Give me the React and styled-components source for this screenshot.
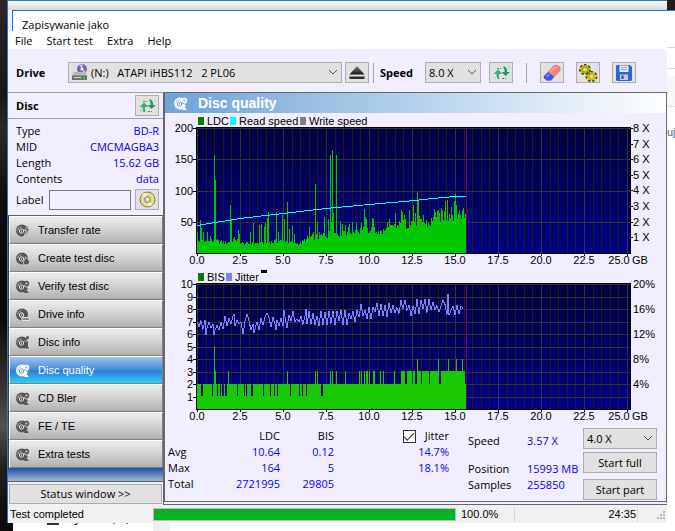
import { useState } from "react";
import styled, { createGlobalStyle } from "styled-components";

const GlobalStyle = createGlobalStyle`
* {
box-sizing: border-box;
}

body {
margin: 0;
background: #181315;
color: #000000;
font-family: "Open Sans", "Noto Sans", sans-serif;
font-size: 11px;
line-height: 16px;
}

button, input, select {
font: inherit;
color: inherit;
}
`

const Desktop = styled.div`
display: flex;
flex-direction: column;
min-height: 100vh;
background: linear-gradient(180deg, #2c2626 0%, #1b1516 18%, #302727 24%, #120c0d 38%, #0e0808 60%, #3b3534 74%, #575150 80%, #231d1d 88%, #0d0909 100%);
`

const Screen = styled.div`
display: flex;
padding-left: 7px;
`

const AppWindow = styled.div`
flex: 1;
min-width: 0;
border-left: 1px solid #1c7ccc;
background: #f0eeff;
`

const TitleStrip = styled.div`
height: 10px;
border-top: 1px solid #1c7ccc;
background: linear-gradient(180deg, #f8f8f8, #d8d8d8);
`

const DialogTitle = styled.div`
height: 21px;
margin-left: 4px;
padding: 7px 0 0 9px;
overflow: hidden;
border-top: 1px solid #1c7ccc;
border-left: 1px solid #1c7ccc;
background: #ffffff;
line-height: 13px;
`

const MenuBar = styled.nav`
display: flex;
gap: 14px;
height: 18px;
padding: 0 7px;
background: #ffffff;
`

const MenuButton = styled.button`
padding: 2px 0 0;
border: 0;
background: none;
line-height: 16px;
`

const ToolBar = styled.div`
display: flex;
align-items: center;
height: 43px;
padding: 4px 8px 0;
`

const ToolLabel = styled.label`
width: ${(props) => props.$width};
font-weight: 700;
`

const SelectBox = styled.div`
position: relative;
width: ${(props) => props.$width};
height: 21px;
`

const Select = styled.select`
width: 100%;
height: 100%;
padding: 0 16px 0 ${(props) => props.$indent || "3px"};
border: 1px solid #adadad;
border-radius: 0;
background: #e1e1e1;
appearance: none;
white-space: pre;
`

const Chevron = styled.svg`
position: absolute;
right: 4px;
top: 7px;
width: 10px;
height: 7px;
pointer-events: none;
`

const DriveMark = styled.svg`
position: absolute;
left: 3px;
top: 2px;
width: 17px;
height: 17px;
pointer-events: none;
`

const IconButton = styled.button`
display: flex;
align-items: center;
justify-content: center;
flex: none;
width: 24px;
height: 21px;
margin-left: ${(props) => props.$gap || "0"};
padding: 0;
border: 1px solid #adadad;
background: #e1e1e1;
`

const Divider = styled.span`
flex: none;
width: 1px;
height: 20px;
margin: 0 ${(props) => props.$right} 0 ${(props) => props.$left};
background: #a0a0a0;
`

const Main = styled.div`
display: grid;
grid-template-columns: 155px minmax(0, 1fr);
`

const SideBar = styled.aside`
display: flex;
flex-direction: column;
border-top: 1px solid #a0a0a0;
`

const DiscHead = styled.div`
display: flex;
align-items: center;
justify-content: space-between;
height: 26px;
padding: 0 4px 0 8px;
border-bottom: 1px solid #a0a0a0;
font-weight: 700;
`

const DiscInfo = styled.div`
height: 96px;
padding: 4px 4px 0 8px;
`

const InfoRow = styled.div`
display: flex;
justify-content: space-between;
`

const InfoValue = styled.span`
color: #0000ff;
`

const LabelRow = styled.div`
display: flex;
align-items: center;
justify-content: space-between;
padding-top: 2px;
`

const LabelInput = styled.input`
width: 82px;
height: 20px;
margin-left: auto;
margin-right: 4px;
border: 1px solid #7a7a7a;
background: #f0eeff;
`

const NavList = styled.div`
border-top: 1px solid #606060;
border-left: 1px solid #404040;
`

const NavButton = styled.button`
display: flex;
align-items: center;
gap: 8px;
width: 100%;
height: 28px;
padding: 0 5px;
border: 1px solid #ffffff;
border-right-color: #808080;
border-bottom-color: #808080;
background: ${(props) => props.$active
    ? "linear-gradient(180deg, #9cc4f0 0%, #4a8ade 48%, #2f7ad6 52%, #2cd0f8 100%)"
    : "linear-gradient(180deg, #ececec 0%, #d2d2d2 50%, #b0b0b0 100%)"};
color: ${(props) => props.$active ? "#ffffff" : "#000000"};
font-family: "Liberation Sans", Arial, sans-serif;
text-align: left;
`

const NavFoot = styled.div`
height: 14px;
background: linear-gradient(180deg, #1f4fa0, #9ab8da);
border-bottom: 1px solid #606060;
`

const StatusButton = styled.button`
height: 20px;
margin: 2px 1px 0;
padding: 0;
border: 1px solid #adadad;
background: #e1e1e1;
line-height: 18px;
`

const Panel = styled.section`
border: 1px solid #66666c;
border-left-width: 2px;
border-bottom: 4px double #66666c;
`

const PanelTitle = styled.h1`
display: flex;
align-items: center;
gap: 10px;
height: 20px;
margin: 0;
padding-left: 8px;
background: linear-gradient(90deg, #6ea4d8, #ffffff);
color: #ffffff;
font-family: "Liberation Sans", Arial, sans-serif;
font-size: 14px;
`

const ChartSvg = styled.svg`
display: block;
width: 100%;
font-family: "Liberation Sans", Arial, sans-serif;
font-size: 11px;
`

const Stats = styled.div`
display: flex;
justify-content: space-between;
height: 78px;
padding: 5px 9px 0 3px;
`

const StatsTable = styled.table`
align-self: flex-start;
border-collapse: collapse;
margin-right: 19px;
`

const HeadCell = styled.th`
width: ${(props) => props.$width};
padding: 0;
font-weight: 400;
text-align: ${(props) => props.$left ? "left" : "right"};
`

const ValueCell = styled.td`
padding: 0;
color: #0000ff;
text-align: right;
`

const CheckLabel = styled.label`
display: flex;
align-items: center;
justify-content: flex-end;
gap: 9px;
`

const CheckInput = styled.input`
display: grid;
place-items: center;
width: 13px;
height: 13px;
margin: 0;
border: 1px solid #333333;
background: #ffffff;
appearance: none;

&:checked::before {
content: "";
width: 9px;
height: 4px;
border-left: 1px solid #333333;
border-bottom: 1px solid #333333;
transform: translateY(-1px) rotate(-45deg);
}
`

const Progress = styled.dl`
display: grid;
grid-template-columns: 59px 1fr;
align-content: start;
flex: 1;
margin: 0;
padding-top: 5px;
`

const ProgressName = styled.dt`
margin: 0;
padding-bottom: ${(props) => props.$tall ? "12px" : "0"};
`

const ProgressValue = styled.dd`
margin: 0;
color: #0000ff;
white-space: nowrap;
`

const Actions = styled.div`
display: flex;
flex-direction: column;
`

const ActionButton = styled.button`
width: 74px;
height: 21px;
margin-top: ${(props) => props.$gap};
padding: 0;
border: 1px solid #adadad;
background: #e1e1e1;
line-height: 18px;
`

const StatusBar = styled.footer`
display: flex;
align-items: center;
height: 18px;
background: #f0f0f0;
font-family: "Liberation Sans", Arial, sans-serif;
`

const StatusText = styled.span`
width: ${(props) => props.$width};
padding-left: 2px;
`

const StatusCell = styled.span`
width: ${(props) => props.$width};
height: 16px;
padding: 0 1px 0 5px;
border-right: 1px solid #d7d7d7;
text-align: ${(props) => props.$right ? "right" : "left"};
`

const ProgressTrack = styled.div`
flex: 1;
height: 13px;
border: 1px solid #bcbcbc;
background: #06b025;
`

const Grip = styled.svg`
flex: none;
width: 10px;
height: 10px;
margin: 4px 1px 0 18px;
`

const Behind = styled.div`
width: 8px;
overflow: hidden;
background: linear-gradient(180deg, #241c1c 10px, #1c7ccc 10px, #1c7ccc 11px, #ffffff 11px, #ffffff 47px, #d8d8d8 47px, #d8d8d8 48px, #ffffff 48px, #ffffff 68px, #d8d8d8 68px, #d8d8d8 69px, #ffffff 69px, #ffffff 76px, #f5f6f8 76px, #f5f6f8 106px, #e2e2e6 106px, #e2e2e6 107px, #ffffff 107px);
padding-top: 124px;
color: #666666;
font-family: "Liberation Sans", Arial, sans-serif;
`

const BehindFoot = styled.div`
display: flex;
flex: 1;
align-items: flex-start;
height: 8px;
margin-left: 13px;
overflow: hidden;
background: linear-gradient(90deg, #ffffff 140px, #f0f0f0 140px, #f0f0f0 157px, #ffffff 157px);
`

const FootDrive = styled.span`
width: 12px;
height: 2px;
margin: 0 9px 0 34px;
background: #333333;
`

const FootText = styled.span`
margin-top: -13px;
font-size: 12px;
`

function DiscIcon({ mark, active }) {
    const body = active ? "#ffffff" : "#555555";
    const line = active ? "#5b98dc" : "#e4e4e4";
    return (
        <svg width="15" height="15" viewBox="0 0 15 15" fill="none">
            <circle cx="7" cy="7.500" r="6" fill={body} />
            <circle cx="6.500" cy="8" r="2.200" stroke={line} />
            <circle cx="6.500" cy="8" r=".7" fill={line} />
            <path d="M2.500 7.500a4.500 4.500 0 0 1 4-4" stroke={line} strokeOpacity=".6" />
            {mark === "gear" && (
                <g>
                    <circle cx="11.500" cy="4.500" r="2.700" fill={body} />
                    <circle cx="11.500" cy="4.500" r="1.300" fill={line} fillOpacity=".6" />
                    <path d="M9 6.500l2.500 1.500 3.500.5" stroke={line} />
                    <path d="M11 10.500l3 3.500H9z" fill={body} />
                </g>
            )}
            {mark === "bolt" && <path d="M14.500 1l-5 6.500h2L9 13.500l6-7.500h-2z" fill={body} stroke={line} strokeWidth=".8" />}
            {mark === "flame" && <path d="M10.500 6c2 2 5 3.500 4 6-1 2.500-5.500 2.500-6 .5-.5-2.500 2-3.500 2-6.500z" fill={body} stroke={line} strokeWidth=".8" />}
            {mark === "drive" && <path d="M7 10.500h7.500v3H7z" fill="#888888" stroke={line} />}
            {mark === "info" && (
                <g>
                    <path d="M9.500 6h4v6h1v2h-5" fill={body} stroke={line} strokeWidth=".8" />
                    <circle cx="12.500" cy="2.500" r="1.500" fill={body} />
                </g>
            )}
        </svg>
    )
}

function RefreshIcon() {
    return (
        <svg width="17" height="16" viewBox="0 0 17 16">
            <path d="M5 4.500L.5 9H3.500v2l1 3h2L6 11V9h3.500z" fill="#2fb573" />
            <path d="M12.500 11L17 7h-3V4.500L12 1.500h-2L11.500 5v2H8.500z" fill="#26985f" />
            <path d="M4 3.500h4M9 13.500h4" stroke="#55806c" strokeDasharray="2 1" />
            <path d="M1 12l2 2M15 1.500L17 3" stroke="#8fd8b4" />
        </svg>
    )
}

function EjectIcon() {
    return (
        <svg width="16" height="14" viewBox="0 0 16 14">
            <defs>
                <linearGradient id="eject" x2="0" y2="1">
                    <stop offset="0" stopColor="#8a8a8a" />
                    <stop offset="1" stopColor="#111111" />
                </linearGradient>
            </defs>
            <path d="M8 0l7.500 8.500H.5z" fill="url(#eject)" />
            <path d="M.5 10h15v3H.5z" fill="#2c2c2c" />
            <path d="M.5 10.500h15" stroke="#888888" />
        </svg>
    )
}

function EraserIcon() {
    return (
        <svg width="18" height="18" viewBox="0 0 18 18">
            <path d="M11 1.500h4l2 2v3l-6 6.500-5.500-5z" fill="#ff8080" stroke="#b06060" strokeWidth=".6" />
            <path d="M5 8l6 5-3 3.500H4l-3-2.500v-2z" fill="#4848f0" stroke="#7070a0" strokeWidth=".6" />
            <path d="M7 7l4-4.500h3L8.500 8.500z" fill="#ffa4a4" />
            <path d="M2.500 12L5 9l2 1.500L4.500 14z" fill="#7474ff" />
        </svg>
    )
}

function GearsIcon() {
    return (
        <svg width="19" height="18" viewBox="0 0 19 18" fill="none">
            <ellipse cx="6" cy="5.500" rx="4" ry="3.500" stroke="#45450a" strokeWidth="4" strokeDasharray="2 1.300" />
            <ellipse cx="6" cy="5.500" rx="3.400" ry="2.900" stroke="#b8b000" strokeWidth="2.600" />
            <ellipse cx="12.500" cy="12.500" rx="4" ry="3.500" stroke="#45450a" strokeWidth="4" strokeDasharray="2 1.300" />
            <ellipse cx="12.500" cy="12.500" rx="3.400" ry="2.900" stroke="#c8c000" strokeWidth="2.600" />
            <path d="M8 8l3 2" stroke="#77700a" strokeWidth="1.500" />
        </svg>
    )
}

function SaveIcon() {
    return (
        <svg width="18" height="18" viewBox="0 0 18 18">
            <path d="M2 1h13l2 2v13l-1 1H2l-1-1V2z" fill="#2468e0" />
            <path d="M4.500 1.500h9V8h-9z" fill="#e4e8f0" />
            <path d="M6 3.500h6M6 5.500h6" stroke="#9aa8c4" />
            <path d="M5 10.500h8V16H5z" fill="#c4ccd0" />
            <path d="M6.500 11.500h2V15h-2z" fill="#2c4c80" />
        </svg>
    )
}

function DiscButtonIcon() {
    return (
        <svg width="17" height="17" viewBox="0 0 17 17">
            <circle cx="8.500" cy="8.500" r="7.500" fill="#e6e08a" stroke="#77744c" />
            <path d="M8.500 8.500L3 3.500l3.500-2zM8.500 8.500l5 5.500-4 1.500z" fill="#fbf9d0" />
            <circle cx="8.500" cy="8.500" r="3" fill="#c9c9b0" stroke="#8c8960" />
            <circle cx="8.500" cy="8.500" r="1.200" fill="#ffffff" />
        </svg>
    )
}

function DropDown({ id, label, width, indent, options, icon }) {
    return (
        <SelectBox $width={width}>
            <Select id={id} aria-label={label} $indent={indent}>
                {options.map((option) => <option key={option}>{option}</option>)}
            </Select>
            {icon}
            <Chevron viewBox="0 0 10 7" fill="none" stroke="#555555">
                <path d="M1 1l4 4 4-4" />
            </Chevron>
        </SelectBox>
    )
}

// plot area inside the 501 unit wide chart drawing
const LEFT = 32;
const GB = 17.2;
const PLOT_RIGHT = 465;
const PLOT_HEIGHT = 125;
const END = 301;

// repeatable scatter for the columns between the measured peaks
function scatter(i, seed) {
    const n = Math.sin(i * 12.9898 + seed * 78.233) * 43758.5453;
    return n - Math.floor(n);
}

function along(points, x) {
    const next = points.findIndex((p) => p[0] >= x);
    if (next < 1) return points[next === 0 ? 0 : points.length - 1][1];
    const [x0, y0] = points[next - 1];
    const [x1, y1] = points[next];
    return y0 + (y1 - y0) * (x - x0) / (x1 - x0);
}

const ldcBase = [[0, 17], [18, 19], [30, 16], [38, 22], [46, 14], [63, 15], [83, 19], [103, 15], [112, 24], [128, 28], [148, 34], [173, 36], [183, 32], [203, 43], [218, 50], [225, 46], [232, 46], [243, 58], [258, 62], [269, 60]];

const ldcPeaks = {
    0: 34, 3: 53, 4: 40, 6: 33, 10: 33, 13: 27, 17: 156, 18: 116, 33: 77, 34: 54, 41: 37, 42: 31,
    53: 34, 56: 48, 62: 44, 64: 47, 67: 42, 68: 49, 70: 56, 71: 66, 79: 66, 81: 33, 85: 60, 87: 55,
    90: 82, 92: 39, 95: 43, 97: 31, 112: 42, 116: 33, 118: 111, 120: 50, 127: 58, 131: 55, 133: 157,
    134: 50, 135: 164, 136: 64, 139: 157, 143: 51, 145: 47, 148: 45, 152: 46, 155: 50, 159: 48,
    164: 48, 167: 71, 168: 57, 169: 54, 175: 56, 176: 54, 181: 35, 186: 38, 190: 50, 192: 54, 198: 64,
    204: 68, 205: 66, 207: 60, 212: 68, 216: 77, 218: 64, 220: 98, 221: 85, 226: 61, 237: 71,
    238: 66, 241: 69, 245: 69, 248: 83, 250: 85, 254: 74, 257: 83, 258: 95, 259: 77, 266: 72, 269: 60,
};

const readSpeed = [[0, 27], [43, 34], [86, 39], [129, 44], [172, 48], [218, 52], [236, 54], [258, 56], [269, 56]];

const bisGaps = [4, 5, 15, 20, 23, 25, 26, 28, 29, 40, 47, 49, 54, 55, 66, 73, 77, 80, 90, 93, 102, 105, 109, 124, 125];
const bisThree = [18, 31, 90, 118, 120, 133, 135, 139, 148, 162, 164, 167, 169, 170, 172, 176, 177, 183, 186, 197];
const bisFour = [220, 241, 251, 259, 265];
const bisLow = [208, 209, 215, 218, 219, 224, 232, 242, 243, 268];

const jitterBase = [[0, 6.8], [8, 6.7], [18, 6.5], [28, 7], [36, 7], [45, 6.8], [58, 6.7], [70, 7], [90, 7.1], [130, 7.2], [150, 7.4], [170, 7.8], [190, 8], [218, 8.1], [269, 8.1]];
const jitterPeaks = { 9: 5.9, 17: 5.9, 18: 6.3, 37: 7.6, 46: 6, 50: 7.6, 57: 6.1, 70: 7.7, 79: 6.3, 87: 7.9, 109: 8, 220: 8.8, 228: 8.8, 246: 8.7, 251: 9.2, 252: 7.5 };

function columns(values, top, scale) {
    return values.map((v, i) => `M${LEFT + i} ${top + PLOT_HEIGHT}v${-Math.round(v * scale)}h1v${Math.round(v * scale)}z`).join("");
}

const ldc = Array.from({ length: 270 }, (_, i) => ldcPeaks[i] || along(ldcBase, i) * (0.82 + scatter(i, 1) * 0.42));

const bis = Array.from({ length: 270 }, (_, i) => {
    if (i === 17) return 5;
    if (bisFour.includes(i)) return 4;
    if (bisThree.includes(i)) return 3;
    if (bisGaps.includes(i)) return 1;
    return i > 203 && !bisLow.includes(i) ? 3 : 2;
});

// one reading every second column, with the swing turning at each reading
const jitter = Array.from({ length: 268 }, (_, i) => {
    const swing = (0.1 + scatter(i, 3)) * (i < 90 ? 0.45 : 0.65);
    return [i, jitterPeaks[i] || along(jitterBase, i) + (i % 4 < 2 ? swing : -swing)];
}).filter(([i]) => i % 2 === 0 || jitterPeaks[i]);

function LegendItem({ x, y, color, children }) {
    return (
        <g>
            <rect x={x} y={y - 4} width="6" height="8" fill={color} />
            <text x={x + 9} y={y + 4}>{children}</text>
        </g>
    )
}

function Plot({ id, top, rows, children }) {
    const bottom = top + PLOT_HEIGHT;
    return (
        <g shapeRendering="crispEdges">
            <defs>
                <linearGradient id={id} x2="0" y2="1">
                    <stop offset="0" stopColor="#000040" />
                    <stop offset="1" stopColor="#000084" />
                </linearGradient>
            </defs>
            <rect x={LEFT - 1} y={top - 1} width={PLOT_RIGHT - LEFT + 2} height={PLOT_HEIGHT + 2} fill="#000000" />
            <rect x={LEFT} y={top} width={PLOT_RIGHT - LEFT} height={PLOT_HEIGHT} fill={`url(#${id})`} />
            {Array.from({ length: 51 }, (_, i) => (
                <rect key={i} x={Math.round(LEFT + i * GB / 2)} y={top} width="1" height={PLOT_HEIGHT} fill={i % 5 ? "#1c1c24" : "#343438"} />
            ))}
            {Array.from({ length: rows }, (_, i) => (
                <rect key={i} x={LEFT} y={Math.round(top + i * PLOT_HEIGHT / rows)} width={PLOT_RIGHT - LEFT} height="1" fill="#303036" />
            ))}
            {children}
            <rect x={END} y={top} width="1" height={PLOT_HEIGHT} fill="#700070" />
            {Array.from({ length: rows }, (_, i) => (
                <rect key={i} x={LEFT - 4} y={Math.round(top + i * PLOT_HEIGHT / rows)} width="4" height="1" />
            ))}
            {Array.from({ length: 11 }, (_, i) => (
                <rect key={i} x={Math.round(LEFT + i * GB * 2.5)} y={bottom} width="1" height="3" />
            ))}
        </g>
    )
}

function SizeAxis({ y }) {
    return (
        <g textAnchor="middle">
            {Array.from({ length: 10 }, (_, i) => (
                <text key={i} x={LEFT + i * 43} y={y}>{(i * 2.5).toFixed(1)}</text>
            ))}
            <text x="454" y={y}>25.0</text>
            <text x="475" y={y}>GB</text>
        </g>
    )
}

function LdcChart() {
    const top = 15;
    return (
        <ChartSvg viewBox="0 0 501 155" role="img" aria-label="LDC and read speed">
            <LegendItem x={33} y={8} color="#008000">LDC</LegendItem>
            <LegendItem x={65} y={8} color="#00ffff">Read speed</LegendItem>
            <LegendItem x={135} y={8} color="#808080">Write speed</LegendItem>
            <Plot id="ldcBack" top={top} rows={4}>
                <path d={columns(ldc, top, 0.625)} fill="#00c800" />
                <path d={"M" + readSpeed.map(([x, h]) => `${LEFT + x} ${top + PLOT_HEIGHT - h - 0.5}`).join("L")} fill="none" stroke="#00ffff" />
            </Plot>
            <g textAnchor="end">
                {[200, 150, 100, 50].map((n, i) => <text key={n} x="28" y={top + 4 + Math.round(i * 31.25)}>{n}</text>)}
            </g>
            {[8, 7, 6, 5, 4, 3, 2, 1].map((n, i) => (
                <g key={n}>
                    <rect x={PLOT_RIGHT} y={top + Math.round(i * 15.6)} width="3" height="1" shapeRendering="crispEdges" />
                    <text x="468" y={top + 4 + Math.round(i * 15.6)}>{n} X</text>
                </g>
            ))}
            <SizeAxis y={151} />
        </ChartSvg>
    )
}

function BisChart() {
    const top = 16;
    return (
        <ChartSvg viewBox="0 0 501 155" role="img" aria-label="BIS and jitter">
            <LegendItem x={33} y={9} color="#008000">BIS</LegendItem>
            <LegendItem x={61} y={9} color="#8080ff">Jitter</LegendItem>
            <rect x="96" y="2" width="6" height="3" />
            <Plot id="bisBack" top={top} rows={10}>
                <path d={columns(bis, top, 12.5)} fill="#18c800" />
                <path d={"M" + jitter.map(([x, v]) => `${LEFT + x} ${(top + PLOT_HEIGHT - v * 12.5).toFixed(1)}`).join("L")} fill="none" stroke="#8080ff" />
            </Plot>
            <g textAnchor="end">
                {[10, 9, 8, 7, 6, 5, 4, 3, 2, 1].map((n, i) => <text key={n} x="28" y={top + 4 + Math.round(i * 12.5)}>{n}</text>)}
            </g>
            {[20, 16, 12, 8, 4].map((n, i) => <text key={n} x="468" y={top + 4 + i * 25}>{n}%</text>)}
            <SizeAxis y={152} />
        </ChartSvg>
    )
}

const discInfo = [
    ["Type", "BD-R"],
    ["MID", "CMCMAGBA3"],
    ["Length", "15.62 GB"],
    ["Contents", "data"],
];

const pages = [
    ["Transfer rate", "bolt"],
    ["Create test disc", "flame"],
    ["Verify test disc", "gear"],
    ["Drive info", "drive"],
    ["Disc info", "info"],
    ["Disc quality", "gear"],
    ["CD Bler", "gear"],
    ["FE / TE", "gear"],
    ["Extra tests", "gear"],
];

function Tools() {
    return (
        <ToolBar>
            <ToolLabel htmlFor="drive" $width="52px">Drive</ToolLabel>
            <DropDown
                id="drive"
                width="274px"
                indent="22px"
                options={["(N:)\u00a0\u00a0 ATAPI iHBS112\u00a0\u00a0 2 PL06"]}
                icon={
                    <DriveMark viewBox="0 0 17 17">
                        <circle cx="11" cy="5" r="5" fill="#7668a8" />
                        <path d="M11 5L8 1l4-1zM11 5l4 3-2 2z" fill="#c8c0e4" />
                        <circle cx="11" cy="5" r="1.500" fill="#ffffff" />
                        <path d="M3 8h11l2 4H1z" fill="#b8b8b8" />
                        <path d="M1 11.500h15V16H1z" fill="#707070" />
                        <path d="M3 13.500h7" stroke="#d8d8d8" />
                        <path d="M12 13h2v2h-2z" fill="#20e020" />
                    </DriveMark>
                }
            />
            <IconButton aria-label="Eject" $gap="3px"><EjectIcon /></IconButton>
            <Divider $left="4px" $right="6px" />
            <ToolLabel htmlFor="readSpeed" $width="45px">Speed</ToolLabel>
            <DropDown id="readSpeed" width="56px" options={["8.0 X"]} />
            <IconButton aria-label="Refresh speeds" $gap="8px"><RefreshIcon /></IconButton>
            <Divider $left="13px" $right="0" />
            <IconButton aria-label="Erase" $gap="13px"><EraserIcon /></IconButton>
            <IconButton aria-label="Settings" $gap="12px"><GearsIcon /></IconButton>
            <IconButton aria-label="Save" $gap="12px"><SaveIcon /></IconButton>
        </ToolBar>
    )
}

function Side({ page, onPage }) {
    return (
        <SideBar>
            <DiscHead>
                Disc
                <IconButton aria-label="Refresh disc"><RefreshIcon /></IconButton>
            </DiscHead>
            <DiscInfo>
                {discInfo.map(([name, value]) => (
                    <InfoRow key={name}>
                        <span>{name}</span>
                        <InfoValue>{value}</InfoValue>
                    </InfoRow>
                ))}
                <LabelRow>
                    <label htmlFor="discLabel">Label</label>
                    <LabelInput id="discLabel" />
                    <IconButton aria-label="Read label"><DiscButtonIcon /></IconButton>
                </LabelRow>
            </DiscInfo>
            <NavList>
                {pages.map(([name, mark]) => (
                    <NavButton key={name} $active={page === name} onClick={() => onPage(name)}>
                        <DiscIcon mark={mark} active={page === name} />
                        {name}
                    </NavButton>
                ))}
            </NavList>
            <NavFoot />
            <StatusButton>Status window &gt;&gt;</StatusButton>
        </SideBar>
    )
}

function Results() {
    return (
        <Stats>
            <StatsTable>
                <thead>
                    <tr>
                        <HeadCell $width="42px" />
                        <HeadCell scope="col" $width="70px">LDC</HeadCell>
                        <HeadCell scope="col" $width="54px">BIS</HeadCell>
                        <HeadCell scope="col" $width="115px">
                            <CheckLabel>
                                <CheckInput type="checkbox" defaultChecked />
                                Jitter
                            </CheckLabel>
                        </HeadCell>
                    </tr>
                </thead>
                <tbody>
                    <tr>
                        <HeadCell scope="row" $left>Avg</HeadCell>
                        <ValueCell>10.64</ValueCell>
                        <ValueCell>0.12</ValueCell>
                        <ValueCell>14.7%</ValueCell>
                    </tr>
                    <tr>
                        <HeadCell scope="row" $left>Max</HeadCell>
                        <ValueCell>164</ValueCell>
                        <ValueCell>5</ValueCell>
                        <ValueCell>18.1%</ValueCell>
                    </tr>
                    <tr>
                        <HeadCell scope="row" $left>Total</HeadCell>
                        <ValueCell>2721995</ValueCell>
                        <ValueCell>29805</ValueCell>
                        <ValueCell />
                    </tr>
                </tbody>
            </StatsTable>
            <Progress>
                <ProgressName $tall>Speed</ProgressName>
                <ProgressValue>3.57 X</ProgressValue>
                <ProgressName>Position</ProgressName>
                <ProgressValue>15993 MB</ProgressValue>
                <ProgressName>Samples</ProgressName>
                <ProgressValue>255850</ProgressValue>
            </Progress>
            <Actions>
                <DropDown label="Test speed" width="74px" options={["4.0 X"]} />
                <ActionButton $gap="3px">Start full</ActionButton>
                <ActionButton $gap="6px">Start part</ActionButton>
            </Actions>
        </Stats>
    )
}

function App() {
    const [page, setPage] = useState("Disc quality");
    return (
        <Desktop>
            <GlobalStyle />
            <Screen>
                <AppWindow>
                    <TitleStrip />
                    <DialogTitle>Zapisywanie jako</DialogTitle>
                    <MenuBar>
                        {["File", "Start test", "Extra", "Help"].map((name) => <MenuButton key={name}>{name}</MenuButton>)}
                    </MenuBar>
                    <Tools />
                    <Main>
                        <Side page={page} onPage={setPage} />
                        <Panel>
                            <PanelTitle>
                                <DiscIcon mark="gear" active />
                                Disc quality
                            </PanelTitle>
                            <LdcChart />
                            <BisChart />
                            <Results />
                        </Panel>
                    </Main>
                    <StatusBar>
                        <StatusText $width="145px">Test completed</StatusText>
                        <ProgressTrack role="progressbar" aria-label="Test progress" aria-valuenow={100} />
                        <StatusCell $width="59px">100.0%</StatusCell>
                        <StatusCell $width="123px" $right>24:35</StatusCell>
                        <Grip viewBox="0 0 10 10" fill="#b8b8b8">
                            <path d="M7 0h2v2H7zM4 3h2v2H4zM7 3h2v2H7zM1 6h2v2H1zM4 6h2v2H4zM7 6h2v2H7z" />
                        </Grip>
                    </StatusBar>
                </AppWindow>
                <Behind>uj</Behind>
            </Screen>
            <BehindFoot>
                <FootDrive />
                <FootText>System (C:)</FootText>
            </BehindFoot>
        </Desktop>
    )
}

export default App;
